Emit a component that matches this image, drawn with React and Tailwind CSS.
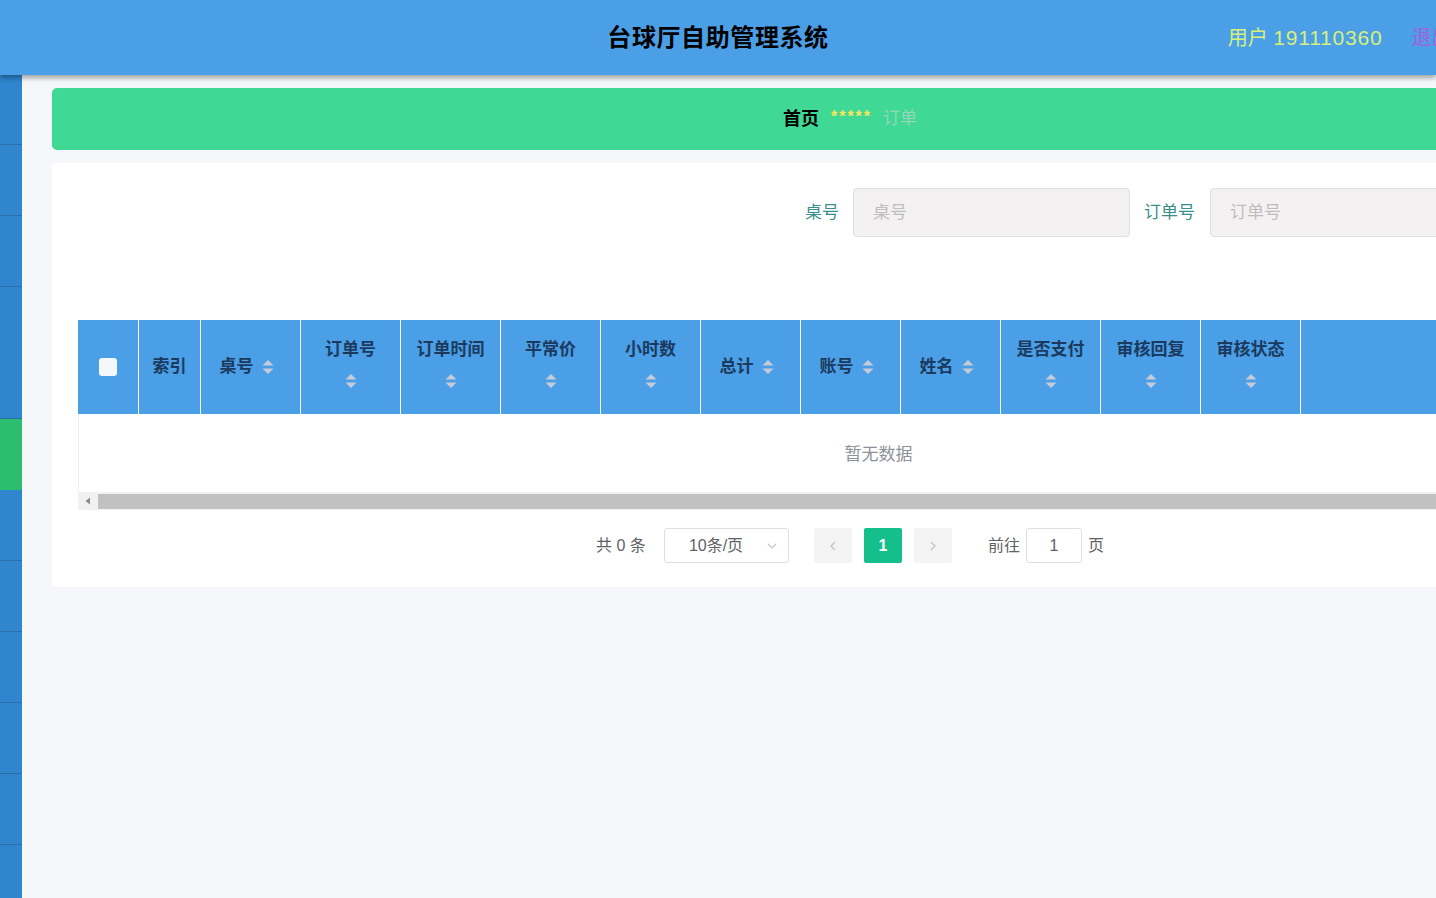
import React from 'react';

const font = "font-['Liberation_Sans','Noto_Sans_CJK_SC',sans-serif]";

const SortIcon = () => (
  <svg width="12" height="16" viewBox="0 0 12 16" className="shrink-0">
    <path d="M6 1 L11.5 6.5 L0.5 6.5 Z" fill="#c5ccd8" />
    <path d="M6 15 L11.5 9.5 L0.5 9.5 Z" fill="#c5ccd8" />
  </svg>
);

const columns = [
  { label: '桌号', w: 'w-[100px]', wrap: false },
  { label: '订单号', w: 'w-[100px]', wrap: true },
  { label: '订单时间', w: 'w-[100px]', wrap: true },
  { label: '平常价', w: 'w-[100px]', wrap: true },
  { label: '小时数', w: 'w-[100px]', wrap: true },
  { label: '总计', w: 'w-[100px]', wrap: false },
  { label: '账号', w: 'w-[100px]', wrap: false },
  { label: '姓名', w: 'w-[100px]', wrap: false },
  { label: '是否支付', w: 'w-[100px]', wrap: true },
  { label: '审核回复', w: 'w-[100px]', wrap: true },
  { label: '审核状态', w: 'w-[100px]', wrap: true },
];

const sideItems = [
  { h: 'h-[70px]' },
  { h: 'h-[71px]' },
  { h: 'h-[71px]' },
  { h: 'h-[132px]' },
  { h: 'h-[71px]', active: true },
  { h: 'h-[71px]' },
  { h: 'h-[71px]' },
  { h: 'h-[71px]' },
  { h: 'h-[71px]' },
  { h: 'h-[71px]' },
  { h: 'h-[71px]' },
];

export default function App() {
  return (
    <div className={`w-[1436px] h-[898px] overflow-hidden bg-[#f5f7fa] flex flex-col ${font}`}>
      <header className="h-[75px] shrink-0 bg-[#4a9fe6] grid grid-cols-[minmax(0,1fr)_auto_minmax(0,1fr)] items-center shadow-[0_3px_5px_rgba(0,0,0,0.35)] relative z-10">
        <div />
        <h1 className="text-[24px] font-bold text-black tracking-[0.6px]">台球厅自助管理系统</h1>
        <div className="flex items-center whitespace-nowrap pl-[399px] text-[20px]">
          <span className="text-[#d8ef7c]">
            用户 <span className="text-[21px] tracking-[0.8px]">191110360</span>
          </span>
          <span className="ml-[29px] text-[#a45fe0]">退出</span>
        </div>
      </header>

      <div className="flex flex-1 min-h-0">
        <aside className="w-[22px] shrink-0 bg-[#2f86cf] flex flex-col">
          {sideItems.map((s, i) => (
            <div
              key={i}
              className={`${s.h} shrink-0 border-b ${s.active ? 'bg-[#2dbd6e] border-[#2dbd6e]' : 'border-[#2a6fa6]'}`}
            />
          ))}
        </aside>

        <main className="flex-1 min-w-0 overflow-hidden pl-[30px] pt-[13px]">
          <div className="w-[1596px]">
            <div className="h-[62px] rounded-[5px] bg-[#3fd995] flex items-center justify-center">
              <span className="text-[18px] font-bold text-black">首页</span>
              <span className="ml-[12px] text-[16px] font-bold tracking-[2px] text-[#f4e65a] -mt-[4px]">*****</span>
              <span className="ml-[11px] text-[17px] text-[#97d6b8]">订单</span>
            </div>

            <div className="mt-[13px] h-[424px] bg-white rounded-[3px] pt-[25px]">
              <div className="flex items-center pl-[753px] h-[49px] text-[17px]">
                <span className="text-[#3a8f8a] mr-[14px]">桌号</span>
                <div className="w-[277px] h-[49px] rounded-[4px] border border-[#e2dede] bg-[#f3f1f1] flex items-center px-[19px] text-[#c0bcbc]">
                  桌号
                </div>
                <span className="text-[#3a8f8a] ml-[14px] mr-[15px]">订单号</span>
                <div className="w-[277px] h-[49px] rounded-[4px] border border-[#e2dede] bg-[#f3f1f1] flex items-center px-[19px] text-[#c0bcbc]">
                  订单号
                </div>
              </div>

              <div className="mx-[26px] mt-[83px]">
                <div className="flex h-[94px] bg-[#4a9fe6] text-[17px] font-bold text-[#1b3a5e]">
                  <div className="w-[61px] shrink-0 border-r border-white flex items-center justify-center">
                    <div className="w-[18px] h-[18px] rounded-[3px] bg-[#f4f7fb]" />
                  </div>
                  <div className="w-[62px] shrink-0 border-r border-white flex items-center justify-center">索引</div>
                  {columns.map((c) =>
                    c.wrap ? (
                      <div key={c.label} className={`${c.w} shrink-0 border-r border-white flex flex-col items-center justify-center gap-[12px] pb-[6px]`}>
                        <span className="leading-[22px]">{c.label}</span>
                        <SortIcon />
                      </div>
                    ) : (
                      <div key={c.label} className={`${c.w} shrink-0 border-r border-white flex items-center justify-center gap-[8px] pr-[8px]`}>
                        <span>{c.label}</span>
                        <SortIcon />
                      </div>
                    )
                  )}
                  <div className="flex-1" />
                </div>

                <div className="h-[78px] flex items-center justify-center pl-[56px] pt-[4px] border-l border-[#eef0f3] text-[17px] text-[#8e9199]">
                  暂无数据
                </div>

                <div className="h-[18px] bg-[#f1f1f1] flex items-center">
                  <div className="w-[20px] h-full flex items-center justify-center">
                    <svg width="6" height="8" viewBox="0 0 6 8">
                      <path d="M0.5 4 L5 0.5 L5 7.5 Z" fill="#8a8a8a" />
                    </svg>
                  </div>
                  <div className="flex-1 h-[15px] bg-[#c1c1c1]" />
                </div>

                <div className="mt-[18px] h-[35px] flex items-center justify-center text-[16px] text-[#606266]">
                  <span>共 0 条</span>
                  <div className="ml-[18px] w-[125px] h-[35px] rounded-[3px] border border-[#dcdfe6] flex items-center pl-[24px] pr-[10px] justify-between">
                    <span className="text-[#606266]">10条/页</span>
                    <svg width="12" height="12" viewBox="0 0 12 12">
                      <path d="M2 4 L6 8 L10 4" stroke="#c0c4cc" strokeWidth="1.2" fill="none" />
                    </svg>
                  </div>
                  <div className="ml-[25px] w-[38px] h-[35px] rounded-[2px] bg-[#f4f4f5] flex items-center justify-center">
                    <svg width="12" height="12" viewBox="0 0 12 12">
                      <path d="M8 2 L4 6 L8 10" stroke="#c0c4cc" strokeWidth="1.4" fill="none" />
                    </svg>
                  </div>
                  <div className="ml-[12px] w-[38px] h-[35px] rounded-[2px] bg-[#14bf8c] flex items-center justify-center text-white font-bold">
                    1
                  </div>
                  <div className="ml-[12px] w-[38px] h-[35px] rounded-[2px] bg-[#f4f4f5] flex items-center justify-center">
                    <svg width="12" height="12" viewBox="0 0 12 12">
                      <path d="M4 2 L8 6 L4 10" stroke="#c0c4cc" strokeWidth="1.4" fill="none" />
                    </svg>
                  </div>
                  <span className="ml-[36px]">前往</span>
                  <div className="ml-[6px] w-[56px] h-[35px] rounded-[3px] border border-[#dcdfe6] flex items-center justify-center">
                    1
                  </div>
                  <span className="ml-[6px]">页</span>
                </div>
              </div>
            </div>
          </div>
        </main>
      </div>
    </div>
  );
}
